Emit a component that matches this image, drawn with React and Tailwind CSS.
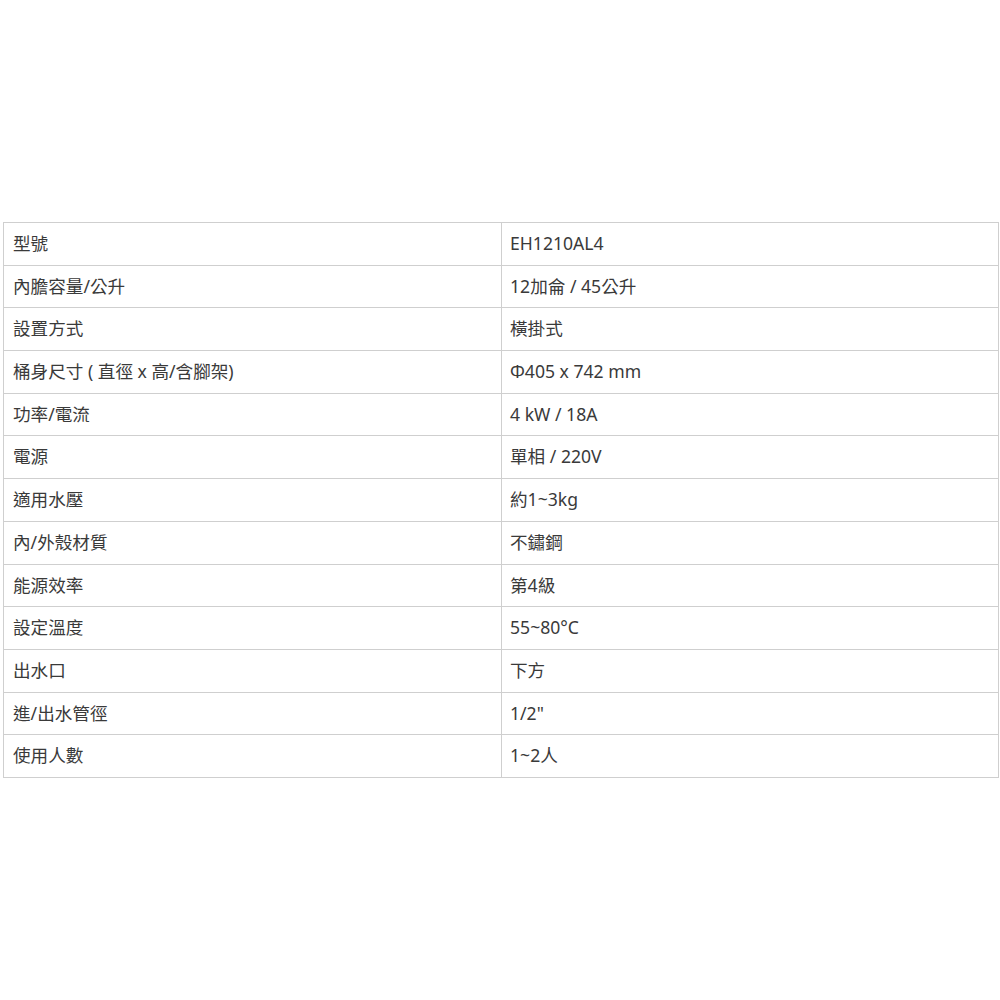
const rows = [
  ['型號', 'EH1210AL4'],
  ['內膽容量/公升', '12加侖 / 45公升'],
  ['設置方式', '橫掛式'],
  ['桶身尺寸 ( 直徑 x 高/含腳架)', 'Φ405 x 742 mm'],
  ['功率/電流', '4 kW / 18A'],
  ['電源', '單相 / 220V'],
  ['適用水壓', '約1~3kg'],
  ['內/外殼材質', '不鏽鋼'],
  ['能源效率', '第4級'],
  ['設定溫度', '55~80°C'],
  ['出水口', '下方'],
  ['進/出水管徑', '1/2"'],
  ['使用人數', '1~2人'],
];

export default function App() {
  return (
    <div className="w-[1000px] h-[1000px] bg-white pt-[222px] pl-[3px]"
      style={{ fontFamily: '"Noto Sans", "Noto Sans CJK TC", sans-serif' }}>
      <table className="w-[996px] border-collapse text-[17.6px] text-[#3a3a3a]">
        <tbody>
          {rows.map(([k, v]) => (
            <tr key={k} className="h-[42.7px]">
              <td className="w-[498px] border border-[#cfcfcf] pl-[9px] align-middle leading-none">{k}</td>
              <td className="border border-[#cfcfcf] pl-[8px] align-middle leading-none">{v}</td>
            </tr>
          ))}
        </tbody>
      </table>
    </div>
  );
}
